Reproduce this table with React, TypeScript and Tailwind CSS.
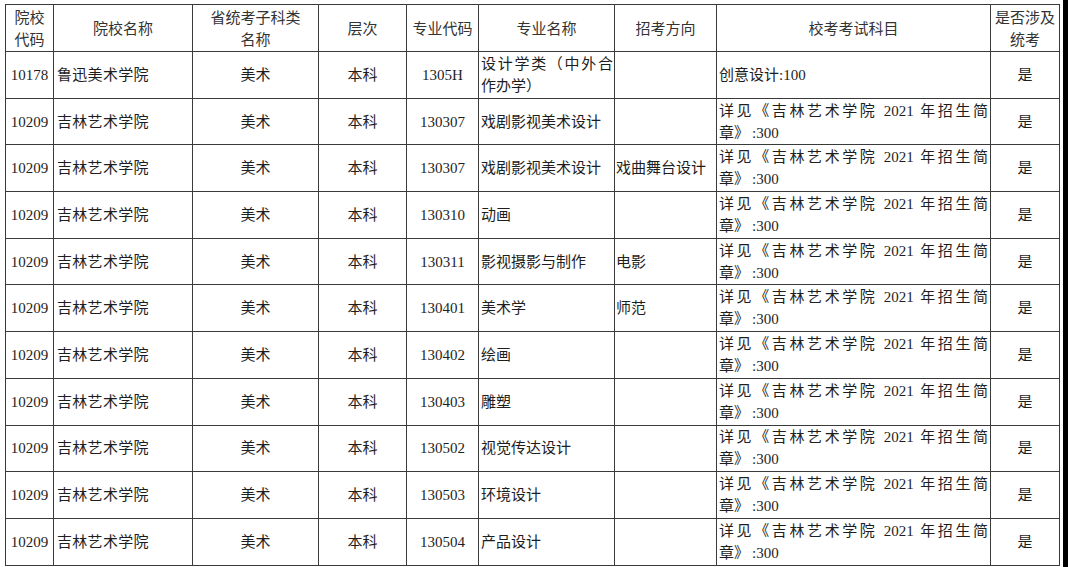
import React from "react";

const SERIF = "font-['Liberation_Serif','Noto_Sans_CJK_SC',serif]";

type Row = {
  code: string;
  school: string;
  major: string;
  majorLines: [string, string];
  dir: string;
  exam: "c" | "j";
};

const rows: Row[] = [
  { code: "10178", school: "鲁迅美术学院", major: "1305H", majorLines: ["设计学类（中外合", "作办学）"], dir: "", exam: "c" },
  { code: "10209", school: "吉林艺术学院", major: "130307", majorLines: ["戏剧影视美术设计", ""], dir: "", exam: "j" },
  { code: "10209", school: "吉林艺术学院", major: "130307", majorLines: ["戏剧影视美术设计", ""], dir: "戏曲舞台设计", exam: "j" },
  { code: "10209", school: "吉林艺术学院", major: "130310", majorLines: ["动画", ""], dir: "", exam: "j" },
  { code: "10209", school: "吉林艺术学院", major: "130311", majorLines: ["影视摄影与制作", ""], dir: "电影", exam: "j" },
  { code: "10209", school: "吉林艺术学院", major: "130401", majorLines: ["美术学", ""], dir: "师范", exam: "j" },
  { code: "10209", school: "吉林艺术学院", major: "130402", majorLines: ["绘画", ""], dir: "", exam: "j" },
  { code: "10209", school: "吉林艺术学院", major: "130403", majorLines: ["雕塑", ""], dir: "", exam: "j" },
  { code: "10209", school: "吉林艺术学院", major: "130502", majorLines: ["视觉传达设计", ""], dir: "", exam: "j" },
  { code: "10209", school: "吉林艺术学院", major: "130503", majorLines: ["环境设计", ""], dir: "", exam: "j" },
  { code: "10209", school: "吉林艺术学院", major: "130504", majorLines: ["产品设计", ""], dir: "", exam: "j" },
];

const td = "border border-[#3a3a3a] p-0 align-middle";
const th = "border border-[#3a3a3a] p-0 align-middle font-normal text-center";

export default function App() {
  return (
    <div className="relative w-[1068px] h-[567px] overflow-hidden bg-white">
      <div className="absolute right-0 top-0 h-full w-[5px] bg-black" />
      <table
        className={`ml-[5px] mt-[4px] w-[1054px] table-fixed border-collapse text-[15px] leading-[22px] text-[#1e1e1e] ${SERIF}`}
      >
        <colgroup>
          <col className="w-[48px]" />
          <col className="w-[139px]" />
          <col className="w-[126px]" />
          <col className="w-[88px]" />
          <col className="w-[72px]" />
          <col className="w-[136px]" />
          <col className="w-[102px]" />
          <col className="w-[274px]" />
          <col className="w-[69px]" />
        </colgroup>
        <thead>
          <tr className="h-[47px] font-['Noto_Sans_CJK_SC',sans-serif] text-[#333] leading-[22px]">
            <th className={`${th} px-[4px]`}>
              院校
              <br />
              代码
            </th>
            <th className={th}>院校名称</th>
            <th className={th}>
              省统考子科类
              <br />
              名称
            </th>
            <th className={th}>层次</th>
            <th className={th}>专业代码</th>
            <th className={th}>专业名称</th>
            <th className={th}>招考方向</th>
            <th className={th}>校考考试科目</th>
            <th className={th}>
              是否涉及
              <br />
              统考
            </th>
          </tr>
        </thead>
        <tbody>
          {rows.map((r, i) => (
            <tr key={i} className="h-[46.7px]">
              <td className={`${td} text-center`}>{r.code}</td>
              <td className={`${td} pl-[3px] tracking-[0.3px]`}>{r.school}</td>
              <td className={`${td} text-center`}>美术</td>
              <td className={`${td} text-center`}>本科</td>
              <td className={`${td} text-center`}>{r.major}</td>
              <td className={`${td} pl-[2px] pr-[1px]`}>
                {r.majorLines[1] ? (
                  <>
                    <div className="text-justify [text-align-last:justify]">{r.majorLines[0]}</div>
                    <div>{r.majorLines[1]}</div>
                  </>
                ) : (
                  <div>{r.majorLines[0]}</div>
                )}
              </td>
              <td className={`${td} pl-[1px]`}>{r.dir}</td>
              <td className={`${td} pl-[2px] pr-[2px]`}>
                {r.exam === "c" ? (
                  <div>创意设计:100</div>
                ) : (
                  <>
                    <div className="text-justify [text-align-last:justify]">
                      详见《吉林艺术学院 2021 年招生简
                    </div>
                    <div>
                      章》<span className="ml-[3px]">:300</span>
                    </div>
                  </>
                )}
              </td>
              <td className={`${td} text-center`}>是</td>
            </tr>
          ))}
        </tbody>
      </table>
    </div>
  );
}
